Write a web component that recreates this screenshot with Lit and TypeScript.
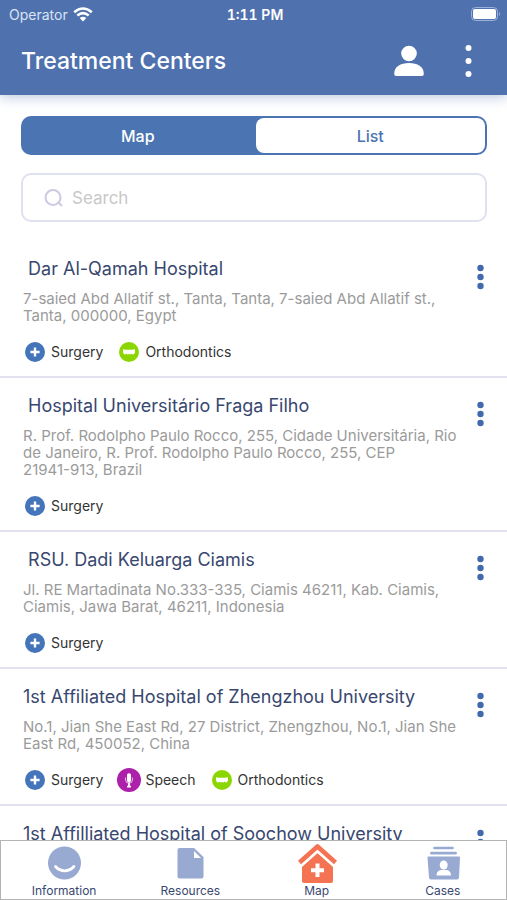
import { LitElement, html, css, svg } from "lit";
import { customElement, property, state } from "lit/decorators.js";
import { classMap } from "lit/directives/class-map.js";

type Service = "surgery" | "orthodontics" | "speech";
type Tab = "information" | "resources" | "map" | "cases";

interface Center {
  name: string;
  address: string;
  services: Service[];
}

const CENTERS: Center[] = [
  {
    name: " Dar Al-Qamah Hospital",
    address: "7-saied Abd Allatif st., Tanta, Tanta, 7-saied Abd Allatif st., Tanta, 000000, Egypt",
    services: ["surgery", "orthodontics"],
  },
  {
    name: " Hospital Universitário Fraga Filho",
    address: "R. Prof. Rodolpho Paulo Rocco, 255, Cidade Universitária, Rio de Janeiro, R. Prof. Rodolpho Paulo Rocco, 255, CEP\n21941-913, Brazil",
    services: ["surgery"],
  },
  {
    name: " RSU. Dadi Keluarga Ciamis",
    address: "Jl. RE Martadinata No.333-335, Ciamis 46211, Kab. Ciamis, Ciamis, Jawa Barat, 46211, Indonesia",
    services: ["surgery"],
  },
  {
    name: "1st Affiliated Hospital of Zhengzhou University",
    address: "No.1, Jian She East Rd, 27 District, Zhengzhou, No.1, Jian She East Rd, 450052, China",
    services: ["surgery", "speech", "orthodontics"],
  },
  {
    name: "1st Affilliated Hospital of Soochow University",
    address: "",
    services: [],
  },
];

const SERVICE_LABELS: Record<Service, string> = {
  surgery: "Surgery",
  orthodontics: "Orthodontics",
  speech: "Speech",
};

const SERVICE_ICONS = {
  surgery: svg`
    <circle cx="12" cy="12" r="10" fill="#4474b9"/>
    <path d="M12 7.4v9.200M7.400 12h9.200" stroke="#fff" stroke-width="2.4"/>`,
  orthodontics: svg`
    <circle cx="12" cy="12" r="10" fill="#8bd600"/>
    <path d="M6 9.2q6 1 12 0v3.400q-.6 1.800-1.8 1.800t-1.7-.9q-.4.9-1.3.9t-1.2-.7q-.4.7-1.3.7t-1.2-.9q-.6.9-1.7.9T6 12.600z" fill="#fff"/>`,
  speech: svg`
    <circle cx="12" cy="12" r="12" fill="#ac20aa"/>
    <rect x="10" y="5.2" width="4" height="9" rx="1.8" fill="#fff"/>
    <path d="M8.6 9.5v2.500q0 3.200 3.400 3.200t3.400-3.200V9.500" fill="none" stroke="#e9c0e8" stroke-width="1"/>
    <path d="M12 14.5v4M10 18.600h4" stroke="#fff" stroke-width="1.8"/>`,
};

const TABS: { id: Tab; label: string }[] = [
  { id: "information", label: "Information" },
  { id: "resources", label: "Resources" },
  { id: "map", label: "Map" },
  { id: "cases", label: "Cases" },
];

const TAB_ICONS = {
  information: svg`
    <circle cx="20.500" cy="20" r="16.500" fill="#98a9d2"/>
    <path d="M11.500 23.500q3.800 4.300 9.200 4.300t9.200-4.300" fill="none" stroke="#fff" stroke-width="2.800" stroke-linecap="round"/>`,
  resources: svg`
    <path d="M9.500 5H24l9.500 9v19.500a2 2 0 0 1-2 2h-22a2 2 0 0 1-2-2V7a2 2 0 0 1 2-2z" fill="#98a9d2"/>
    <path d="M24 8v7h7z" fill="#fff"/>`,
  map: svg`
    <path d="M20.500 8 5 22v16a2 2 0 0 0 2 2h27a2 2 0 0 0 2-2V22z" fill="#f37352"/>
    <path d="M2.500 23.500 20.500 7.500 38.500 23.500" fill="none" stroke="#fff" stroke-width="4"/>
    <path d="M2.500 19.500 20.500 3.500 38.500 19.500" fill="none" stroke="#f37352" stroke-width="4.600" stroke-linejoin="round"/>
    <path d="M20.500 20.500v13.500M14 27.200h13" stroke="#fff" stroke-width="4"/>`,
  cases: svg`
    <path d="M11.500 5h18" stroke="#98a9d2" stroke-width="2.600" stroke-linecap="round"/>
    <path d="M8.500 10.200h24" stroke="#98a9d2" stroke-width="2.800" stroke-linecap="round"/>
    <path d="M5.500 13.500h30.500a1 1 0 0 1 1 1L36 34.500a2 2 0 0 1-2 2H8a2 2 0 0 1-2-2L4.500 14.500a1 1 0 0 1 1-1z" fill="#98a9d2"/>
    <ellipse cx="20.700" cy="22" rx="4" ry="4.600" fill="#fff"/>
    <path d="M13.500 32.500q0-5 4.500-5.500h5.500q4.500.500 4.500 5.500z" fill="#fff"/>`,
};

@customElement("status-bar")
class StatusBar extends LitElement {
  static styles = css`
    :host {
      display: grid;
      grid-template-columns: 1fr auto 1fr;
      align-items: center;
      height: 28px;
      padding: 0 6px 0 9px;
      color: #fff;
      font-size: 14px;
    }
    .carrier { display: flex; align-items: center; gap: 5px; color: #dbe4f5; }
    .time { font-weight: 600; font-variant-numeric: tabular-nums; }
    .battery { justify-self: end; }
    svg { display: block; }
  `;
  render() {
    return html`
      <div class="carrier">
        <span>Operator</span>
        <svg width="20" height="15" viewBox="0 0 20 15" aria-label="Wi-Fi">
          <g fill="none" stroke="#fff" stroke-width="2.6">
            <path d="M1.200 5.200q8.800-7.400 17.600 0"/>
            <path d="M4.300 8.600q5.700-4.800 11.400 0"/>
          </g>
          <path d="M6.700 11q3.300-2.600 6.600 0L10 14.400z" fill="#fff"/>
        </svg>
      </div>
      <span class="time">1:11 PM</span>
      <svg class="battery" width="30" height="14" viewBox="0 0 30 14" aria-label="Battery">
        <rect x=".5" y=".5" width="26" height="13" rx="4" fill="none" stroke="#9db2da"/>
        <rect x="2" y="2" width="23" height="10" rx="2" fill="#fff"/>
        <path d="M28 5q2 2 0 4z" fill="#9db2da"/>
      </svg>
    `;
  }
}

@customElement("center-card")
class CenterCard extends LitElement {
  @property({ attribute: false }) center!: Center;

  static styles = css`
    :host {
      display: flex;
      padding: 16px 16px 12px 23px;
      border-bottom: 2px solid #e1e1f1;
    }
    .body { flex: 1; min-width: 0; }
    .name {
      margin: 0;
      font-size: 18px;
      line-height: 24px;
      font-weight: 400;
      color: #38476f;
      white-space: pre-wrap;
    }
    .address {
      margin: 9px 0 16px;
      font-size: 15px;
      line-height: 17px;
      color: #9b9b9b;
      white-space: pre-line;
    }
    .services {
      display: flex;
      flex-wrap: wrap;
      gap: 14px;
      margin: 0;
      padding: 0;
      list-style: none;
      font-size: 14px;
      line-height: 24px;
      color: #333;
    }
    .service { display: flex; gap: 4px; }
    .more {
      flex: none;
      align-self: flex-start;
      width: 22px;
      height: 40px;
      margin-left: 8px;
      padding: 0;
      border: 0;
      background: none;
    }
    svg { display: block; }
  `;
  render() {
    const { name, address, services } = this.center;
    return html`
      <div class="body">
        <h2 class="name">${name}</h2>
        <p class="address">${address}</p>
        <ul class="services">
          ${services.map(
            (s) => html`<li class="service">
              <svg width="24" height="24" viewBox="0 0 24 24" aria-hidden="true">${SERVICE_ICONS[s]}</svg>
              <span>${SERVICE_LABELS[s]}</span>
            </li>`
          )}
        </ul>
      </div>
      <button class="more" aria-label="More options">
        <svg width="22" height="40" viewBox="0 0 22 40" fill="#4269ad">
          <circle cx="11.500" cy="11" r="3.200"/><circle cx="11.500" cy="20" r="3.200"/><circle cx="11.500" cy="29" r="3.200"/>
        </svg>
      </button>
    `;
  }
}

@customElement("app-root")
class AppRoot extends LitElement {
  @state() private view: "map" | "list" = "list";
  @state() private tab: Tab = "map";

  static styles = css`
    :host {
      display: flex;
      flex-direction: column;
      height: 100vh;
      background: #fff;
      font-family: Inter, "Liberation Sans", sans-serif;
    }
    button { font: inherit; cursor: pointer; }
    svg { display: block; }
    .header {
      position: relative;
      background: #4f71ae;
      box-shadow: 0 2px 12px rgba(79, 113, 174, 0.4);
    }
    .bar {
      display: flex;
      align-items: center;
      height: 65px;
      padding: 0 18px 2px 21px;
    }
    .title { flex: 1; margin: 0; font-size: 23px; font-weight: 500; color: #fff; }
    .icon-button { padding: 0; border: 0; background: none; }
    .actions { display: flex; gap: 24px; }
    .content { flex: 1; min-height: 0; overflow: hidden; }
    .controls { padding: 21px 20px 19px 21px; }
    .segments {
      display: flex;
      gap: 3px;
      height: 39px;
      box-sizing: border-box;
      padding: 2px;
      border-radius: 10px;
      background: #4a75b2;
    }
    .segment {
      flex: 1;
      padding: 0;
      border: 0;
      border-radius: 8px;
      background: none;
      color: #fff;
      font-size: 16px;
      font-weight: 500;
    }
    .segment.selected { background: #fff; color: #4a73b5; }
    .search {
      display: flex;
      align-items: center;
      gap: 8px;
      height: 49px;
      box-sizing: border-box;
      margin-top: 18px;
      padding: 0 21px;
      border: 2px solid #e0e1f0;
      border-radius: 10px;
    }
    .search-input {
      flex: 1;
      min-width: 0;
      padding: 0;
      border: 0;
      outline: 0;
      background: none;
      font: inherit;
      font-size: 17px;
      color: #38476f;
    }
    .search-input::placeholder { color: #c8c8c8; opacity: 1; }
    .tabs {
      display: grid;
      grid-template-columns: repeat(4, 1fr);
      height: 60px;
      box-sizing: border-box;
      border: 1px solid #b4b4b4;
      background: #fff;
    }
    .tab {
      display: flex;
      flex-direction: column;
      align-items: center;
      padding: 2px 0 0;
      border: 0;
      background: none;
      color: #38476f;
      font-size: 12px;
      line-height: 16px;
    }
  `;

  render() {
    return html`
      <header class="header">
        <status-bar></status-bar>
        <div class="bar">
          <h1 class="title">Treatment Centers</h1>
          <div class="actions">
            <button class="icon-button" aria-label="Profile">
              <svg width="32" height="36" viewBox="0 0 32 36" fill="#fff">
                <circle cx="16" cy="10.500" r="7.800"/>
                <path d="M1.200 31C1.200 23.500 7.500 20 16 20s14.800 3.500 14.800 11q0 2-2 2H3.200q-2 0-2-2z"/>
              </svg>
            </button>
            <button class="icon-button" aria-label="Menu">
              <svg width="40" height="36" viewBox="0 0 40 36" fill="#fff">
                <circle cx="19.500" cy="5" r="3"/><circle cx="19.500" cy="18" r="3"/><circle cx="19.500" cy="31" r="3"/>
              </svg>
            </button>
          </div>
        </div>
      </header>
      <main class="content">
        <div class="controls">
          <div class="segments">
            ${(["map", "list"] as const).map(
              (v) => html`<button
                class=${classMap({ segment: true, selected: this.view === v })}
                aria-pressed=${this.view === v}
                @click=${() => (this.view = v)}
              >${v === "map" ? "Map" : "List"}</button>`
            )}
          </div>
          <label class="search">
            <svg width="20" height="20" viewBox="0 0 20 20" fill="none" stroke="#ccc9e2" stroke-width="2" aria-hidden="true">
              <circle cx="9" cy="9.500" r="7.500"/><path d="M15 15 17.500 17.500" stroke-linecap="round"/>
            </svg>
            <input class="search-input" type="text" placeholder="Search" aria-label="Search" />
          </label>
        </div>
        ${CENTERS.map((c) => html`<center-card .center=${c}></center-card>`)}
      </main>
      <nav class="tabs">
        ${TABS.map(
          (t) => html`<button
            class="tab"
            aria-current=${this.tab === t.id ? "page" : "false"}
            @click=${() => (this.tab = t.id)}
          >
            <svg width="40" height="40" viewBox="0 0 40 40" aria-hidden="true">${TAB_ICONS[t.id]}</svg>
            <span>${t.label}</span>
          </button>`
        )}
      </nav>
    `;
  }
}
